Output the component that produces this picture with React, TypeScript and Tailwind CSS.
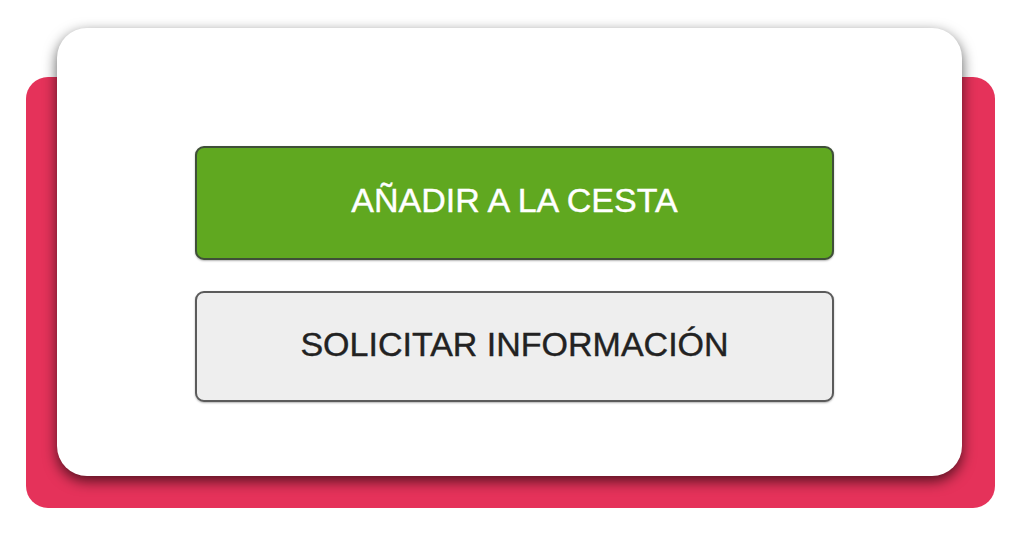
export default function App() {
  return (
    <div className="h-[536px] w-[1024px] overflow-hidden bg-white pt-[77px] pl-[26px] font-['Liberation_Sans',Arial,sans-serif]">
      <div className="flex w-[969px] flex-col rounded-[22px] bg-[#e5325a] pr-[33px] pb-[32px] pl-[31px]">
        <div className="-mt-[49px] flex h-[448px] flex-col rounded-[30px] bg-white pt-[118px] pl-[138px] shadow-[0_5px_14px_rgba(0,0,0,0.65)]">
          <button className="flex h-[114px] w-[639px] items-center justify-center rounded-[9px] border-2 border-[#3f4f38] bg-[#60a820] pb-[5px] text-[34px] text-white shadow-[0_1px_2px_rgba(0,0,0,0.3)] [-webkit-text-stroke:0.4px_white]">
            AÑADIR A LA CESTA
          </button>
          <button className="mt-[31px] flex h-[111px] w-[639px] items-center justify-center rounded-[9px] border-2 border-[#5b5b5b] bg-[#eeeeee] pb-[4px] text-[34px] text-[#222222] shadow-[0_1px_2px_rgba(0,0,0,0.3)] [-webkit-text-stroke:0.4px_#222222]">
            SOLICITAR INFORMACIÓN
          </button>
        </div>
      </div>
    </div>
  );
}
